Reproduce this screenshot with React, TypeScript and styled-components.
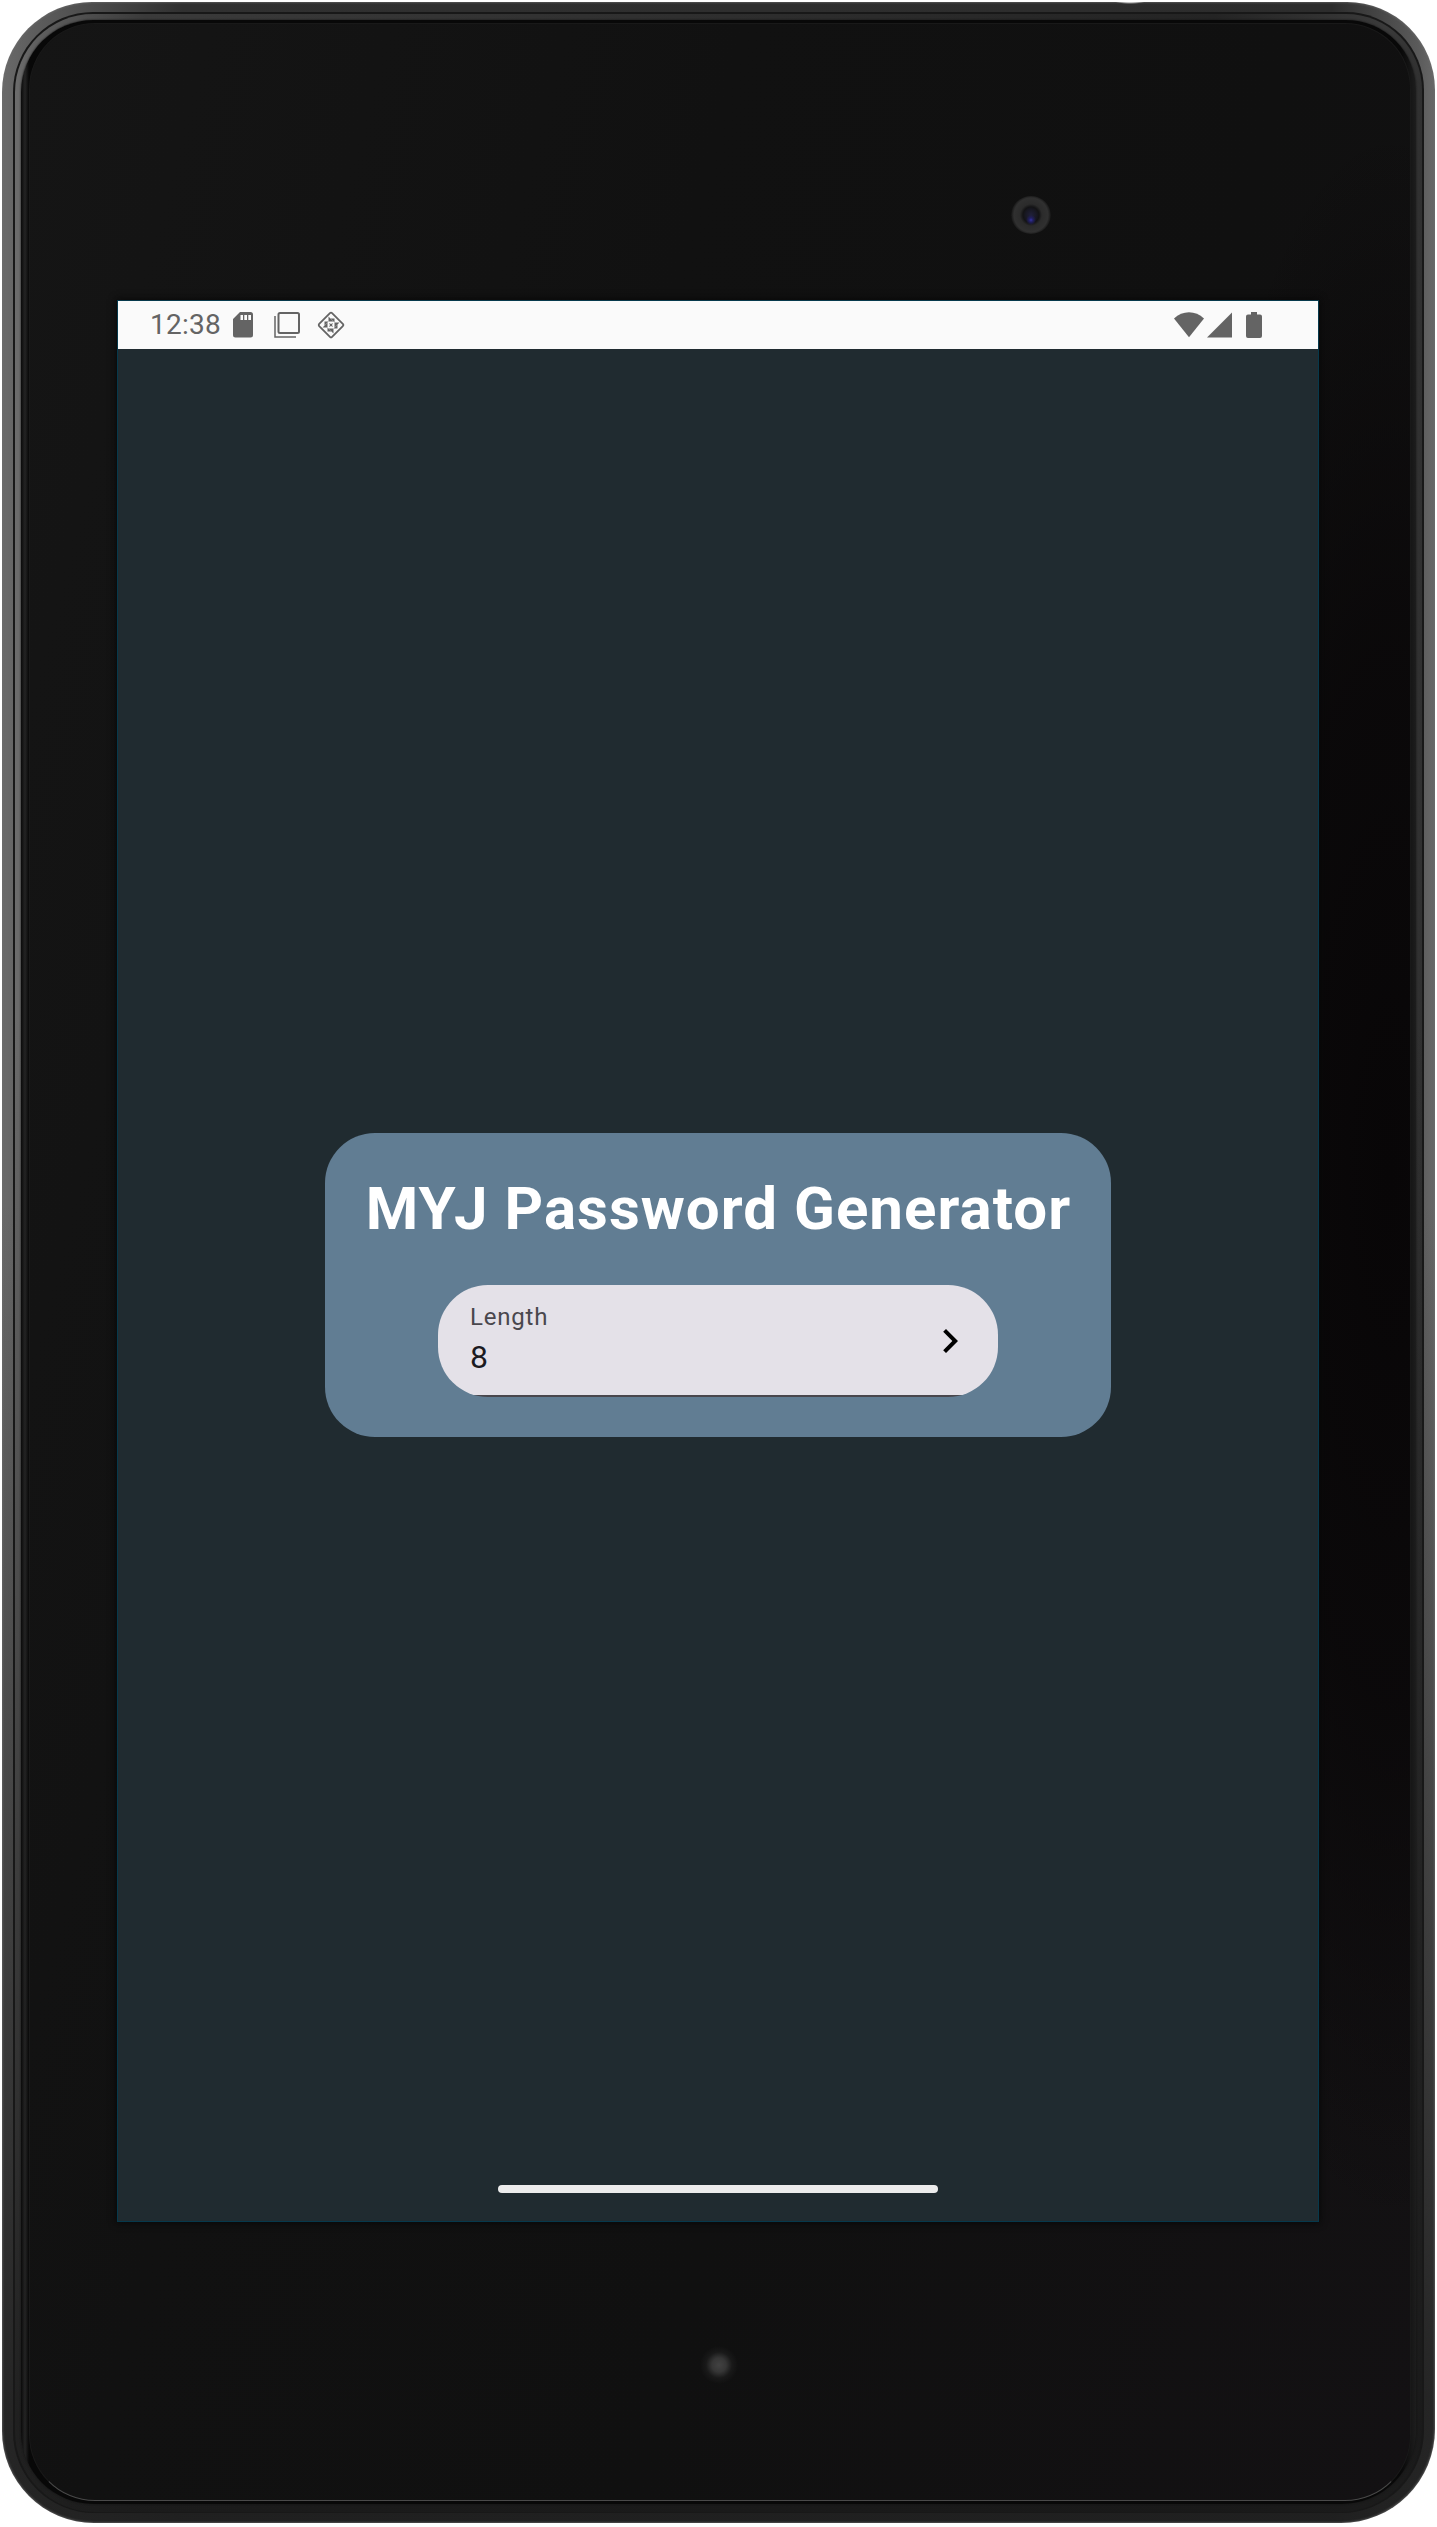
import React from "react";
import styled, { createGlobalStyle } from "styled-components";

const GlobalStyle = createGlobalStyle`
  * { box-sizing: border-box; }
  html, body { margin: 0; padding: 0; background: #fff; }
  body { font-family: Roboto, "Noto Sans", sans-serif; }
`;

const Page = styled.main`
  width: 1437px;
  height: 2527px;
  padding: 2px 2px 4px;
  position: relative;
  overflow: hidden;
`;

const PowerButton = styled.div`
  position: absolute;
  top: 0;
  left: 1112px;
  width: 36px;
  height: 4px;
  background: radial-gradient(ellipse 18px 4px at 50% 0, #fff 0, #fff 45%, transparent 100%);
`;

const OuterShell = styled.div`
  width: 100%;
  height: 100%;
  padding: 10px 11px;
  border-radius: 90px 88px 94px 92px;
  background:
    linear-gradient(180deg, transparent 0, transparent 1200px, rgba(30, 30, 30, 0.9) 2400px),
    linear-gradient(90deg, #6a6a6a 0, #5e5e5e 30px, #303030 180px, #2c2c2c 1330px, #5a5a5a 1415px, #686868);
  box-shadow: inset 0 0 2px 1px rgba(110, 110, 110, 0.6);
`;

const Groove = styled.div`
  width: 100%;
  height: 100%;
  padding: 2px 2px 1px;
  border-radius: 80px 78px 83px 81px;
  background: #181818;
`;

const Bevel = styled.div`
  width: 100%;
  height: 100%;
  padding: 6px 6px 8px;
  border-radius: 78px 76px 82px 80px;
  background:
    linear-gradient(180deg, transparent 0, transparent 1000px, rgba(24, 24, 24, 0.9) 2400px),
    linear-gradient(90deg, #6c6c6c 0, #606060 20px, #3a3a3a 130px, #242424 1200px, #3a3a3a 1370px, #303030);
`;

const InnerGroove = styled.div`
  width: 100%;
  height: 100%;
  padding: 3px 5px 3px 8px;
  border-radius: 72px 70px 74px 72px;
  background: linear-gradient(90deg, #0a0a0a 0, #242424 4px, #080808 8px, #080808 1380px, #1d1d1d);
  box-shadow: 0 0 2px #111;
`;

const Face = styled.div`
  width: 100%;
  height: 100%;
  display: flex;
  flex-direction: column;
  align-items: center;
  padding: 277px 4px 0 0;
  border: 1px solid #191919;
  border-bottom-color: #4a4a4a;
  border-radius: 66px;
  background:
    radial-gradient(ellipse 240px 1050px at 1360px 1150px, #080607 0, rgba(9, 7, 8, 0.8) 50%, transparent 100%),
    linear-gradient(105deg, #151515 0%, #111 35%, #101010 62%, #131113 100%);
  position: relative;
`;

const Camera = styled.div`
  position: absolute;
  top: 172px;
  left: 981px;
  width: 40px;
  height: 38px;
  border-radius: 50%;
  background:
    radial-gradient(circle at 50% 63%, #3532a0 0, #211f60 2px, transparent 5px),
    radial-gradient(circle, #20203a 0, #171720 6px, #131315 8px, #2b2b2b 11px, #303030 17px, #151515 20px);
`;

const Sensor = styled.div`
  position: absolute;
  top: 2322px;
  left: 670px;
  width: 38px;
  height: 38px;
  border-radius: 50%;
  background: radial-gradient(circle, #424242 0, #363636 7px, #191919 13px, transparent 19px);
`;

const Screen = styled.section`
  width: 1200px;
  height: 1920px;
  flex: none;
  display: flex;
  flex-direction: column;
  align-items: center;
  background: #202b30;
  box-shadow: 0 0 0 1px #06394c, 0 0 7px 2px #080808;
`;

const StatusBar = styled.header`
  width: 100%;
  height: 48px;
  flex: none;
  display: flex;
  justify-content: space-between;
  padding: 0 56px 0 32px;
  background: #fafafa;
  color: #646464;
`;

const StatusGroup = styled.div`
  display: flex;
  align-items: center;
`;

const Clock = styled.time`
  width: 80px;
  font-size: 28px;
  line-height: 48px;
  letter-spacing: 0.25px;
`;

const StatusIcon = styled.svg<{ $gap?: number }>`
  display: block;
  flex: none;
  margin-left: ${({ $gap = 0 }) => $gap}px;
`;

const Content = styled.div`
  flex: 1;
  width: 100%;
  display: flex;
  justify-content: center;
  align-items: flex-start;
  padding-top: 784px;
`;

const Card = styled.article`
  width: 786px;
  height: 304px;
  display: flex;
  flex-direction: column;
  align-items: center;
  justify-content: space-between;
  padding: 40px;
  border-radius: 50px;
  background: #617d93;
`;

const Title = styled.h1`
  margin: 0;
  padding-left: 1px;
  color: #fff;
  font-size: 60px;
  line-height: 72px;
  font-weight: 700;
  letter-spacing: 1.04px;
  white-space: nowrap;
`;

const Field = styled.button`
  width: 560px;
  height: 112px;
  display: flex;
  justify-content: space-between;
  align-items: center;
  padding: 0 24px 0 32px;
  border: 0;
  border-radius: 50px;
  background: linear-gradient(#e4e1e8 110px, #49474d 110px);
  font-family: inherit;
  text-align: left;
`;

const FieldText = styled.span`
  display: flex;
  flex-direction: column;
`;

const Label = styled.span`
  color: #49474d;
  font-size: 24px;
  line-height: 32px;
  letter-spacing: 0.8px;
`;

const Value = styled.span`
  color: #1b1b1f;
  font-size: 32px;
  line-height: 48px;
  letter-spacing: 1px;
`;

const HomeBar = styled.div`
  width: 440px;
  height: 8px;
  flex: none;
  margin-bottom: 28px;
  border-radius: 4px;
  background: #ececec;
`;

export default function App() {
  return (
    <Page>
      <GlobalStyle />
      <OuterShell>
        <Groove>
          <Bevel>
            <InnerGroove>
              <Face>
                <Camera />
                <Screen>
                  <StatusBar>
                    <StatusGroup>
                      <Clock>12:38</Clock>
                      <StatusIcon $gap={3} width="20" height="26" viewBox="0 0 20 26" fill="currentColor">
                        <path fillRule="evenodd" d="M7 0h10.5A2.5 2.5 0 0 1 20 2.500v20.500a2.500 2.500 0 0 1-2.500 2.500h-15A2.500 2.500 0 0 1 0 23V7ZM7.500 3v5h2.500V3ZM11.300 3v5h2.700V3ZM15.300 3v5h2.700V3Z" />
                      </StatusIcon>
                      <StatusIcon $gap={21} width="26" height="26" viewBox="0 0 26 26" fill="none" stroke="currentColor">
                        <rect x="4.500" y="1" width="20.500" height="20" rx="1.500" strokeWidth="2" />
                        <path d="M1 4v21h21" strokeWidth="1.500" />
                      </StatusIcon>
                      <StatusIcon $gap={17} width="28" height="28" viewBox="0 0 28 28" fill="none" stroke="currentColor">
                        <rect x="4.900" y="4.900" width="18.200" height="18.200" rx="1.500" strokeWidth="1.800" transform="rotate(45 14 14)" />
                        <g fill="currentColor" stroke="none" transform="translate(14 14)">
                          <path d="M-2.500-8.500 2.500-3.500h-5ZM8.500-2.500 3.500 2.500v-5ZM2.500 8.500-2.500 3.500h5ZM-8.500 2.500-3.500-2.500v5Z" />
                          <path d="M-6.500-3.500h4l-4 4ZM3.500-6.500v4l-4-4ZM6.500 3.500h-4l4-4ZM-3.500 6.500v-4l4 4Z" />
                          <path d="M-2-2 0-1 2-2 1 0 2 2 0 1-2 2-1 0Z" />
                        </g>
                      </StatusIcon>
                    </StatusGroup>
                    <StatusGroup>
                      <StatusIcon width="30" height="26" viewBox="0 0 30 26" fill="currentColor">
                        <path d="M0 6.500C8.500-1.800 21.500-1.800 30 6.500L15 25.300Z" />
                      </StatusIcon>
                      <StatusIcon $gap={3} width="25" height="26" viewBox="0 0 25 26" fill="currentColor">
                        <path d="M25 0.500V25.500H0Z" />
                      </StatusIcon>
                      <StatusIcon $gap={14} width="16" height="26" viewBox="0 0 16 26" fill="currentColor">
                        <path d="M5 0h6v2.500h3a2 2 0 0 1 2 2V24a2 2 0 0 1-2 2H2a2 2 0 0 1-2-2V4.500a2 2 0 0 1 2-2h3Z" />
                      </StatusIcon>
                    </StatusGroup>
                  </StatusBar>
                  <Content>
                    <Card>
                      <Title>MYJ Password Generator</Title>
                      <Field type="button">
                        <FieldText>
                          <Label>Length</Label>
                          <Value>8</Value>
                        </FieldText>
                        <svg width="48" height="48" viewBox="0 0 24 24" fill="#000">
                          <path d="M8.590 16.590 13.170 12 8.590 7.410 10 6l6 6-6 6Z" />
                        </svg>
                      </Field>
                    </Card>
                  </Content>
                  <HomeBar />
                </Screen>
                <Sensor />
              </Face>
            </InnerGroove>
          </Bevel>
        </Groove>
      </OuterShell>
      <PowerButton />
    </Page>
  );
}
